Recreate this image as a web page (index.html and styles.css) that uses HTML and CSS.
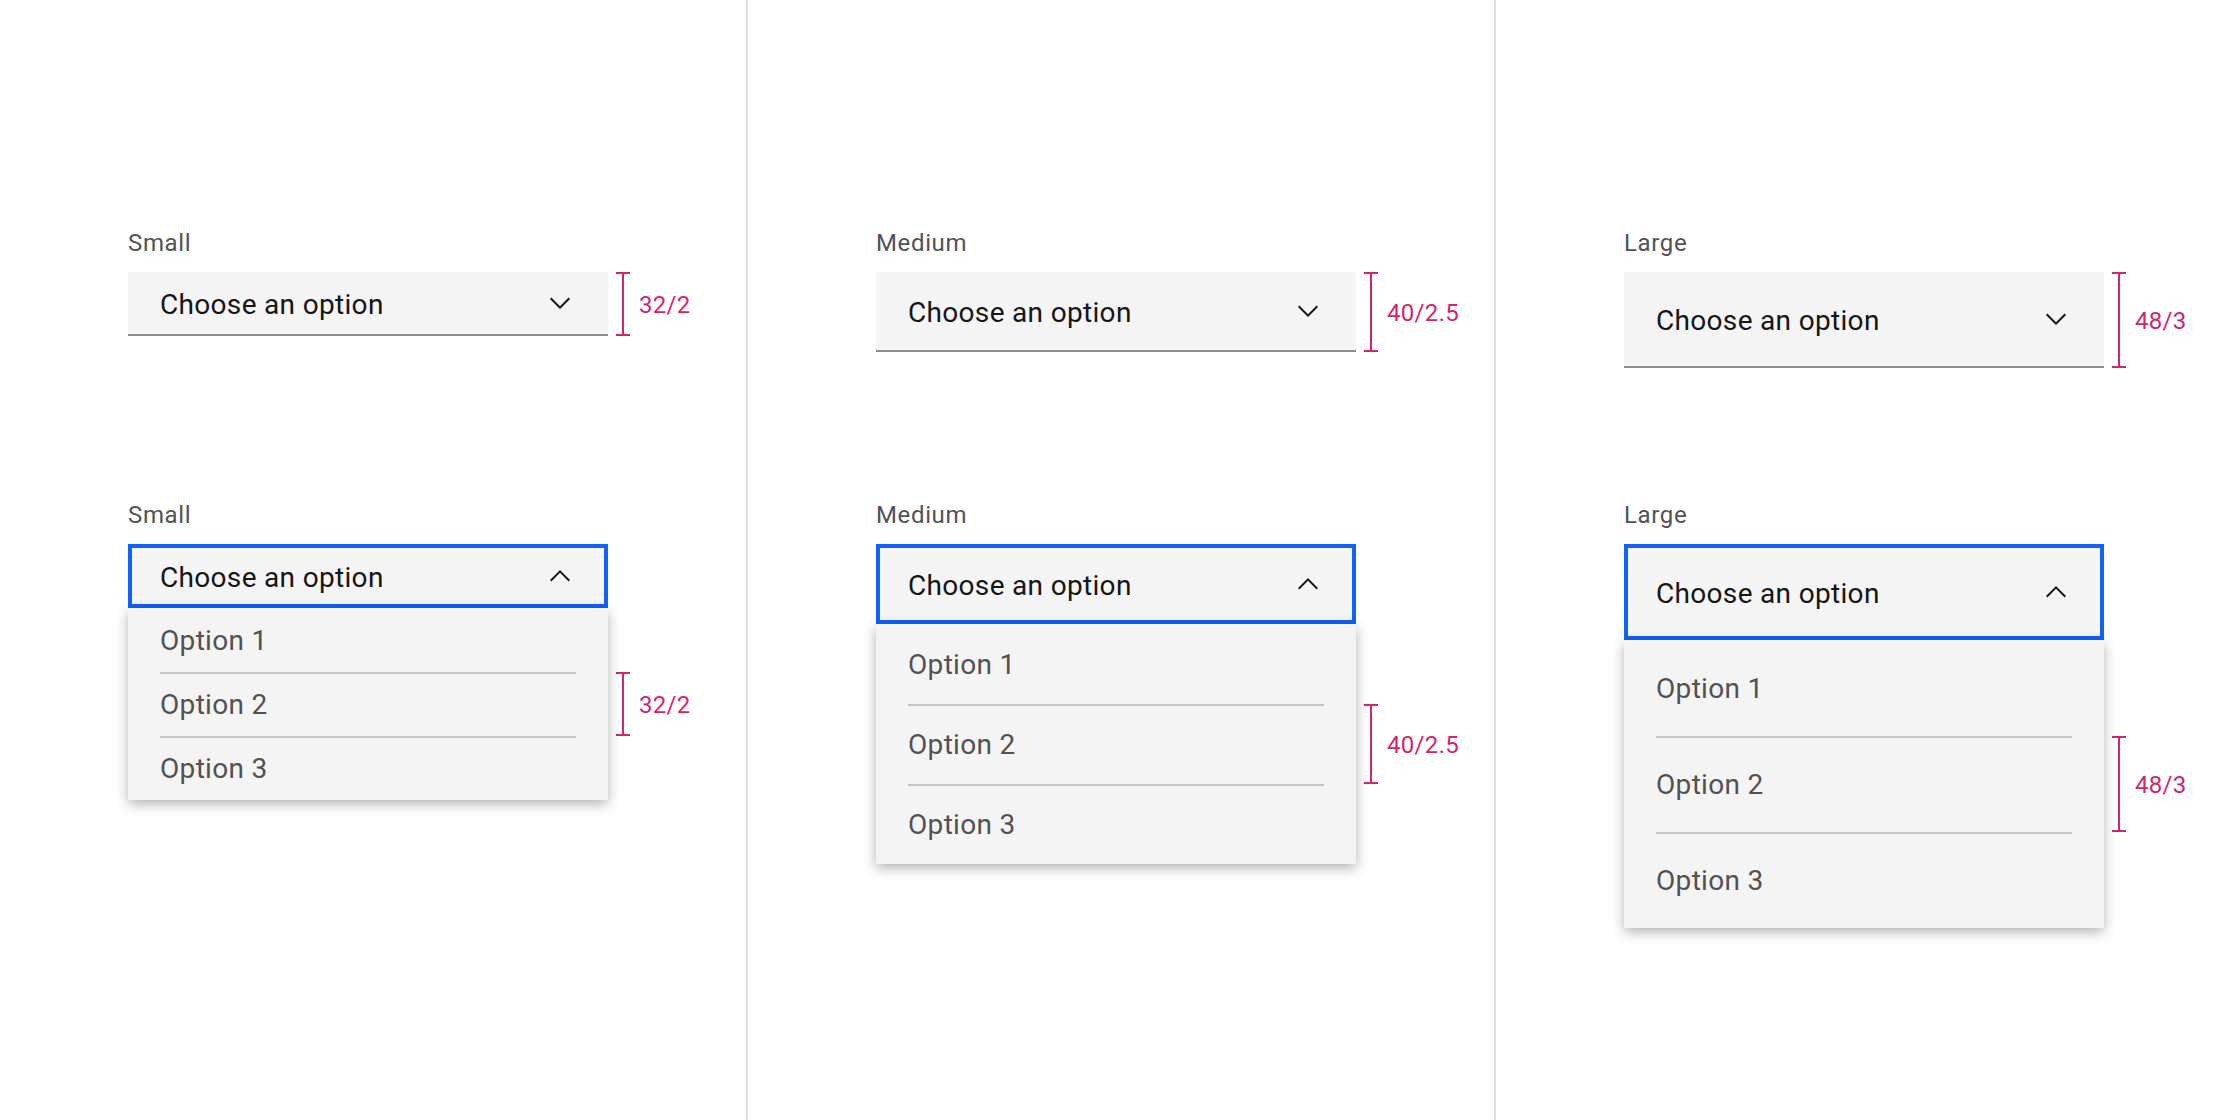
FILE: index.html
```html
<!DOCTYPE html>
<html lang="en">
<head>
<meta charset="utf-8">
<title>Dropdown sizes</title>
<link rel="stylesheet" href="styles.css">
</head>
<body>
<div class="page">
  <section class="col size-sm">
    <div class="block">
      <div class="label">Small</div>
      <div class="row">
        <div class="field">
          <span class="value">Choose an option</span>
          <svg class="chev" viewBox="0 0 16 16"><path d="M8 11L3 6 3.7 5.3 8 9.6 12.3 5.3 13 6z"/></svg>
        </div>
        <div class="spec"><div class="bracket"><i></i></div><span class="spec-text">32/2</span></div>
      </div>
    </div>
    <div class="block">
      <div class="label">Small</div>
      <div class="row">
        <div class="stack">
          <div class="field open">
            <span class="value">Choose an option</span>
            <svg class="chev" viewBox="0 0 16 16"><path d="M8 5L13 10 12.3 10.7 8 6.4 3.7 10.7 3 10z"/></svg>
          </div>
          <div class="menu">
            <div class="item"><div class="item-in">Option 1</div></div>
            <div class="item"><div class="item-in">Option 2</div></div>
            <div class="item"><div class="item-in">Option 3</div></div>
          </div>
        </div>
        <div class="spec spec-item"><div class="bracket"><i></i></div><span class="spec-text">32/2</span></div>
      </div>
    </div>
  </section>

  <section class="col size-md">
    <div class="block">
      <div class="label">Medium</div>
      <div class="row">
        <div class="field">
          <span class="value">Choose an option</span>
          <svg class="chev" viewBox="0 0 16 16"><path d="M8 11L3 6 3.7 5.3 8 9.6 12.3 5.3 13 6z"/></svg>
        </div>
        <div class="spec"><div class="bracket"><i></i></div><span class="spec-text">40/2.5</span></div>
      </div>
    </div>
    <div class="block">
      <div class="label">Medium</div>
      <div class="row">
        <div class="stack">
          <div class="field open">
            <span class="value">Choose an option</span>
            <svg class="chev" viewBox="0 0 16 16"><path d="M8 5L13 10 12.3 10.7 8 6.4 3.7 10.7 3 10z"/></svg>
          </div>
          <div class="menu">
            <div class="item"><div class="item-in">Option 1</div></div>
            <div class="item"><div class="item-in">Option 2</div></div>
            <div class="item"><div class="item-in">Option 3</div></div>
          </div>
        </div>
        <div class="spec spec-item"><div class="bracket"><i></i></div><span class="spec-text">40/2.5</span></div>
      </div>
    </div>
  </section>

  <section class="col size-lg">
    <div class="block">
      <div class="label">Large</div>
      <div class="row">
        <div class="field">
          <span class="value">Choose an option</span>
          <svg class="chev" viewBox="0 0 16 16"><path d="M8 11L3 6 3.7 5.3 8 9.6 12.3 5.3 13 6z"/></svg>
        </div>
        <div class="spec"><div class="bracket"><i></i></div><span class="spec-text">48/3</span></div>
      </div>
    </div>
    <div class="block">
      <div class="label">Large</div>
      <div class="row">
        <div class="stack">
          <div class="field open">
            <span class="value">Choose an option</span>
            <svg class="chev" viewBox="0 0 16 16"><path d="M8 5L13 10 12.3 10.7 8 6.4 3.7 10.7 3 10z"/></svg>
          </div>
          <div class="menu">
            <div class="item"><div class="item-in">Option 1</div></div>
            <div class="item"><div class="item-in">Option 2</div></div>
            <div class="item"><div class="item-in">Option 3</div></div>
          </div>
        </div>
        <div class="spec spec-item"><div class="bracket"><i></i></div><span class="spec-text">48/3</span></div>
      </div>
    </div>
  </section>
</div>
</body>
</html>
```

FILE: styles.css
```css
html, body {
  margin: 0;
  padding: 0;
  background: #ffffff;
}
body {
  font-family: Roboto, "Noto Sans", sans-serif;
  color: #161616;
}
.page {
  display: grid;
  grid-template-columns: 746px 748px 746px;
  width: 2240px;
  height: 1120px;
  overflow: hidden;
}
.col {
  padding: 224px 0 0 128px;
  box-sizing: border-box;
}
.col + .col {
  border-left: 2px solid #e0e0e0;
}
.block {
  height: 272px;
}
.label {
  font-size: 24px;
  line-height: 32px;
  color: #525252;
  letter-spacing: 0.64px;
  padding-top: 3px;
  margin-bottom: 13px;
}
.row {
  display: flex;
  align-items: flex-start;
}
.stack {
  width: 480px;
}
.field {
  width: 480px;
  height: var(--h);
  box-sizing: border-box;
  background: #f4f4f4;
  border-bottom: 2px solid #8d8d8d;
  display: flex;
  align-items: center;
  justify-content: space-between;
  padding: 0 32px;
}
.field.open {
  border: 4px solid #0f62fe;
  padding: 0 28px;
}
.value {
  font-size: 28px;
  letter-spacing: 0.32px;
  color: #161616;
  padding-top: 2px;
}
.chev {
  width: 32px;
  height: 32px;
  fill: #161616;
  flex: none;
}
.menu {
  background: #f4f4f4;
  box-shadow: 0 4px 12px rgba(0, 0, 0, 0.3);
}
.item {
  height: var(--h);
  padding: 0 32px;
}
.item-in {
  height: 100%;
  box-sizing: border-box;
  display: flex;
  align-items: center;
  font-size: 28px;
  letter-spacing: 0.32px;
  color: #525252;
}
.item + .item .item-in {
  border-top: 2px solid #c6c6c6;
  padding-bottom: 1px;
}
.spec {
  display: flex;
  align-items: center;
  height: var(--h);
  margin-left: 8px;
}
.spec-item {
  margin-top: calc(var(--h) * 2);
}
.bracket {
  width: 14px;
  height: 100%;
  box-sizing: border-box;
  border-top: 2px solid #d02670;
  border-bottom: 2px solid #d02670;
  display: flex;
  justify-content: center;
}
.bracket i {
  display: block;
  width: 2px;
  height: 100%;
  background: #d02670;
}
.spec-text {
  margin-left: 9px;
  font-size: 24px;
  letter-spacing: 0.32px;
  color: #d02670;
  padding-top: 2px;
}
.size-sm { --h: 64px; }
.size-md { --h: 80px; }
.size-lg { --h: 96px; }
```
